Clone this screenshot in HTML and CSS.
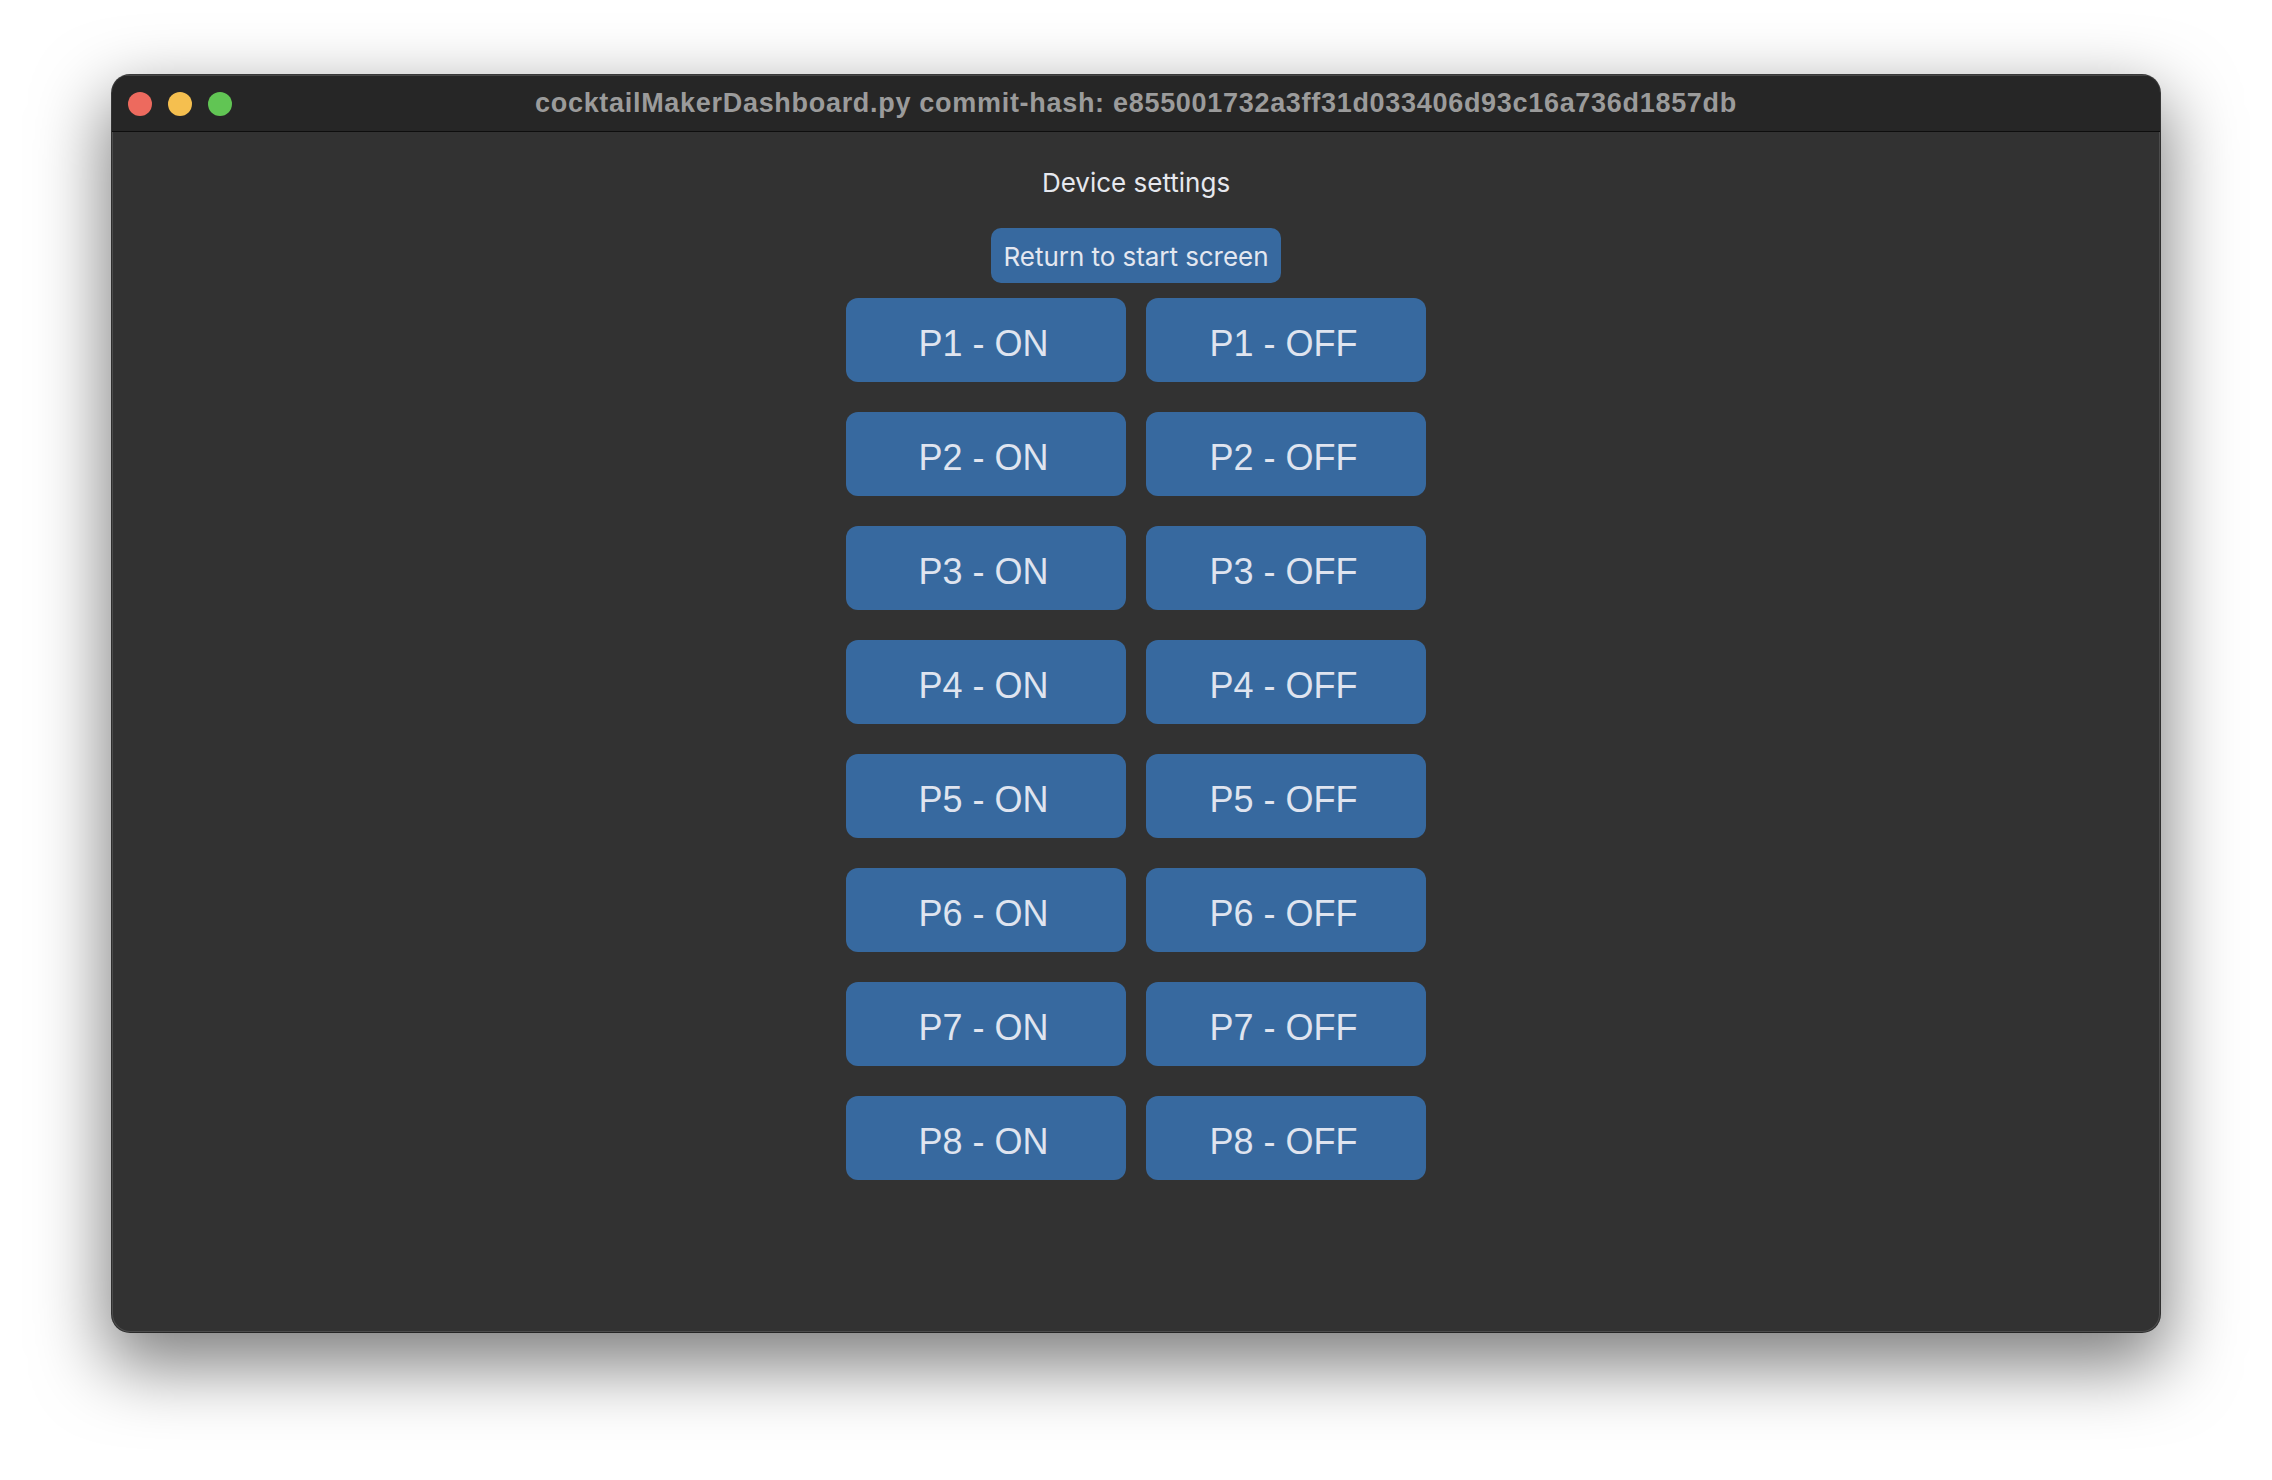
FILE: index.html
```html
<!DOCTYPE html>
<html>
<head>
<meta charset="utf-8">
<link rel="stylesheet" href="styles.css">
</head>
<body>
<div class="window">
  <div class="titlebar">
    <div class="lights">
      <span class="light red"></span>
      <span class="light yellow"></span>
      <span class="light green"></span>
    </div>
    <div class="title">cocktailMakerDashboard.py commit-hash: e855001732a3ff31d033406d93c16a736d1857db</div>
    <div></div>
  </div>
  <div class="content">
    <div class="heading">Device settings</div>
    <button class="return-btn">Return to start screen</button>
    <div class="grid">
      <button class="pbtn">P1 - ON</button><button class="pbtn">P1 - OFF</button>
      <button class="pbtn">P2 - ON</button><button class="pbtn">P2 - OFF</button>
      <button class="pbtn">P3 - ON</button><button class="pbtn">P3 - OFF</button>
      <button class="pbtn">P4 - ON</button><button class="pbtn">P4 - OFF</button>
      <button class="pbtn">P5 - ON</button><button class="pbtn">P5 - OFF</button>
      <button class="pbtn">P6 - ON</button><button class="pbtn">P6 - OFF</button>
      <button class="pbtn">P7 - ON</button><button class="pbtn">P7 - OFF</button>
      <button class="pbtn">P8 - ON</button><button class="pbtn">P8 - OFF</button>
    </div>
  </div>
</div>
</body>
</html>
```

FILE: styles.css
```css
html, body {
  margin: 0;
  padding: 0;
  background: #ffffff;
}
body {
  width: 2272px;
  height: 1480px;
  overflow: hidden;
  padding-top: 75px;
  padding-left: 112px;
  box-sizing: border-box;
}
.window {
  width: 2048px;
  height: 1257px;
  border-radius: 18px;
  overflow: hidden;
  background: #323232;
  box-shadow: 0 0 0 1px rgba(0,0,0,0.75), 0 28px 70px 6px rgba(0,0,0,0.5), inset 0 0 0 1px rgba(255,255,255,0.13);
  display: flex;
  flex-direction: column;
}
.titlebar {
  height: 56px;
  flex: none;
  background: #262626;
  border-bottom: 1px solid #0e0e0e;
  display: grid;
  grid-template-columns: 1fr auto 1fr;
  align-items: center;
  box-shadow: inset 0 1px 0 rgba(255,255,255,0.15);
}
.lights {
  display: flex;
  gap: 16px;
  padding-left: 16px;
  padding-top: 2px;
}
.light {
  width: 24px;
  height: 24px;
  border-radius: 50%;
  display: block;
}
.red { background: #ed6a5e; }
.yellow { background: #f5bf4f; }
.green { background: #61c554; }
.title {
  font-family: "Liberation Sans", Arial, sans-serif;
  font-weight: bold;
  font-size: 27px;
  letter-spacing: 0.7px;
  color: #9b9b9b;
  white-space: nowrap;
  padding-top: 1px;
}
.content {
  flex: 1;
  display: flex;
  flex-direction: column;
  align-items: center;
  padding-top: 35px;
}
.heading {
  font-family: Inter, "Noto Sans", sans-serif;
  font-size: 26px;
  line-height: 32px;
  color: #e6e8ee;
}
.return-btn {
  margin-top: 29px;
  height: 55px;
  padding: 3px 13px 0 13px;
  border: none;
  border-radius: 10px;
  background: #37699f;
  color: #e3e7f0;
  font-family: Inter, "Noto Sans", sans-serif;
  font-size: 26px;
  line-height: 52px;
  letter-spacing: -0.05px;
}
.grid {
  margin-top: 15px;
  display: grid;
  grid-template-columns: 280px 280px;
  column-gap: 20px;
  row-gap: 30px;
}
.pbtn {
  height: 84px;
  border: none;
  border-radius: 12px;
  background: #37699f;
  color: #dfe4ef;
  font-family: "Liberation Sans", Arial, sans-serif;
  font-size: 36px;
  line-height: 76px;
  padding: 8px 5px 0 0;
  text-align: center;
}
```
